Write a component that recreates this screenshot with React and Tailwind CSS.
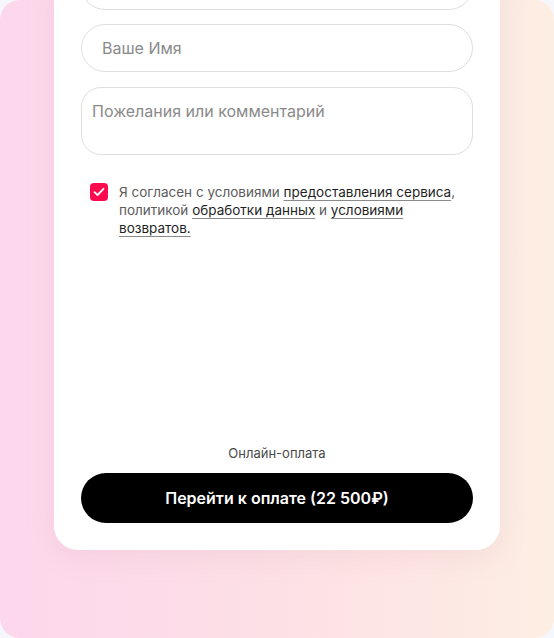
import React from "react";

export default function App() {
  return (
    <div className="w-[554px] h-[638px] bg-[#f6f7fc]" style={{ fontFamily: "Inter, 'Noto Sans', sans-serif" }}>
      <div className="w-full h-full rounded-[20px] overflow-hidden bg-gradient-to-r from-[#fdd7ec] via-[#fde0e6] to-[#fdeee3] flex flex-col justify-end px-[54px] pb-[88px]">
        <div className="bg-white rounded-[24px] shadow-[0_6px_30px_rgba(180,120,140,0.12)] px-[27px] pb-[27px] flex flex-col">
          <div className="h-[48px] rounded-full border border-[#dedede] shrink-0" />
          <div className="mt-[14px] h-[48px] rounded-full border border-[#dedede] flex items-center px-[20px] text-[16px] text-[#8a8a8a]">
            Ваше Имя
          </div>
          <div className="mt-[15px] h-[68px] rounded-[20px] border border-[#dedede] px-[10px] pt-[13px] text-[16px] leading-[20px] text-[#8a8a8a]">
            Пожелания или комментарий
          </div>
          <div className="mt-[28px] flex items-start pl-[9px]">
            <div className="w-[18px] h-[18px] rounded-[4px] bg-[#ff0a4e] flex items-center justify-center shrink-0 mt-[0px]">
              <svg width="12" height="10" viewBox="0 0 12 10" fill="none">
                <path d="M1.5 5.2 L4.5 8 L10.5 1.8" stroke="white" strokeWidth="1.8" strokeLinecap="round" strokeLinejoin="round" />
              </svg>
            </div>
            <p className="ml-[11px] text-[13.5px] leading-[18px] text-[#5c5c5c] pr-[10px]">
              Я согласен с условиями{" "}
              <span className="text-[#1f1f1f] underline decoration-[#8a8a8a] underline-offset-[3px]">предоставления сервиса</span>
              , политикой{" "}
              <span className="text-[#1f1f1f] underline decoration-[#8a8a8a] underline-offset-[3px]">обработки данных</span> и{" "}
              <span className="text-[#1f1f1f] underline decoration-[#8a8a8a] underline-offset-[3px]">условиями возвратов.</span>
            </p>
          </div>
          <div className="mt-[206px] text-center text-[13px] leading-[20px] text-[#4a4a4a]">Онлайн-оплата</div>
          <button className="mt-[10px] h-[50px] rounded-full bg-black text-white text-[16px] font-semibold">
            Перейти к оплате (22 500₽)
          </button>
        </div>
      </div>
    </div>
  );
}
